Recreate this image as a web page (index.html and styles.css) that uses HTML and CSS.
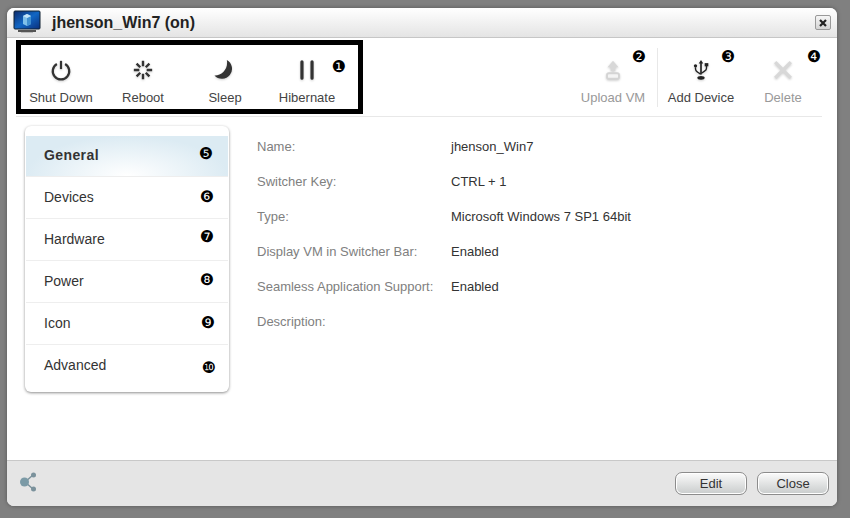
FILE: index.html
```html
<!DOCTYPE html>
<html lang="en">
<head>
    <meta charset="UTF-8">
    <meta name="viewport" content="width=device-width, initial-scale=1.0">
    <title>jhenson_Win7 (on)</title>
    <link rel="stylesheet" href="styles.css">
</head>
<body>
    <div class="window">
        <!-- Title bar -->
        <div class="titlebar">
            <svg class="vm-icon" width="28" height="28" viewBox="0 0 28 28">
                <defs>
                    <linearGradient id="screen" x1="0" y1="0" x2="1" y2="1">
                        <stop offset="0" stop-color="#0b2a6b"/>
                        <stop offset="0.5" stop-color="#1166c4"/>
                        <stop offset="1" stop-color="#0a2f7c"/>
                    </linearGradient>
                </defs>
                <rect x="1" y="2" width="26" height="18" rx="1" fill="url(#screen)" stroke="#123"/>
                <path d="M10 7l4-2 4 2v8l-4 2-4-2z" fill="#7fc0ea"/>
                <path d="M14 9v8l4-2V7z" fill="#3f8fd0"/>
                <path d="M10 7l4 2 4-2-4-2z" fill="#c3e3f7"/>
                <rect x="5" y="21" width="18" height="2" fill="#555"/>
                <rect x="8" y="23" width="12" height="1" fill="#bbb"/>
            </svg>
            <span class="title">jhenson_Win7 (on)</span>
            <button class="close-x">
                <svg width="10" height="10" viewBox="0 0 10 10"><path d="M2 2l6 6M8 2l-6 6" stroke="#222" stroke-width="2.2"/></svg>
            </button>
        </div>

        <!-- Toolbar -->
        <div class="toolbar">
            <div class="highlight"></div>
            <div class="action">
                <svg class="icon" width="22" height="22" viewBox="0 0 24 24"><path d="M7.500 5.500a9 9 0 1 0 9 0" fill="none" stroke="#333" stroke-width="2.4"/><path d="M12 2v9" stroke="#333" stroke-width="2.4"/></svg>
                <span>Shut Down</span>
            </div>
            <div class="action">
                <svg class="icon" width="22" height="22" viewBox="0 0 24 24"><path d="M12 2v6M12 16v6M2 12h6M16 12h6M5 5l4 4M15 15l4 4M19 5l-4 4M9 15l-4 4" stroke="#333" stroke-width="2.6"/></svg>
                <span>Reboot</span>
            </div>
            <div class="action">
                <svg class="icon" width="22" height="22" viewBox="0 0 24 24"><path d="M14 1A11 11 0 1 1 0.500 18C8 18.500 16 11 14 1z" fill="#333"/></svg>
                <span>Sleep</span>
            </div>
            <div class="action">
                <svg class="icon" width="22" height="22" viewBox="0 0 24 24"><path d="M6.500 3v18M17.500 3v18" stroke="#333" stroke-width="3.500" stroke-linecap="round"/></svg>
                <span>Hibernate</span>
                <b class="badge badge-1">❶</b>
            </div>
            <div class="action disabled push">
                <svg class="icon" width="22" height="22" viewBox="0 0 24 24"><path d="M12 2l6 7h-3.500v4h-5V9H6z" fill="#d8d8d8"/><rect x="5.500" y="15.500" width="13" height="6" rx="2" fill="#f4f4f4" stroke="#d4d4d4" stroke-width="2"/></svg>
                <span>Upload VM</span>
                <b class="badge badge-2">❷</b>
            </div>
            <div class="divider"></div>
            <div class="action">
                <svg class="icon" width="22" height="22" viewBox="0 0 24 24"><path d="M12 1l2.500 4h-1.600v12h-1.800V5H9.500z" fill="#222"/><path d="M6 9v2c0 2 1 2.500 2.500 3.500l3 2M18 7v3c0 2-1 2.500-2.500 3.500l-3 2" fill="none" stroke="#222" stroke-width="1.500"/><circle cx="6" cy="7.500" r="1.800" fill="#222"/><rect x="16" y="4.500" width="4" height="3.500" fill="#222"/><ellipse cx="12" cy="20.500" rx="4" ry="2" fill="#222"/></svg>
                <span>Add Device</span>
                <b class="badge badge-3">❸</b>
            </div>
            <div class="action disabled">
                <svg class="icon" width="22" height="22" viewBox="0 0 24 24"><path d="M3.500 3.500l17 17M20.500 3.500l-17 17" stroke="#d8d8d8" stroke-width="3.500"/></svg>
                <span>Delete</span>
                <b class="badge badge-4">❹</b>
            </div>
        </div>

        <div class="content">
            <!-- Side navigation -->
            <ul class="nav">
                <li class="nav-item active">General<b class="badge badge-5">❺</b></li>
                <li class="nav-item">Devices<b class="badge badge-6">❻</b></li>
                <li class="nav-item">Hardware<b class="badge badge-7">❼</b></li>
                <li class="nav-item">Power<b class="badge badge-8">❽</b></li>
                <li class="nav-item">Icon<b class="badge badge-9">❾</b></li>
                <li class="nav-item">Advanced<b class="badge badge-10">❿</b></li>
            </ul>

            <!-- VM details -->
            <dl class="details">
                <dt>Name:</dt><dd>jhenson_Win7</dd>
                <dt>Switcher Key:</dt><dd>CTRL + 1</dd>
                <dt>Type:</dt><dd>Microsoft Windows 7 SP1 64bit</dd>
                <dt>Display VM in Switcher Bar:</dt><dd>Enabled</dd>
                <dt>Seamless Application Support:</dt><dd>Enabled</dd>
                <dt>Description:</dt><dd></dd>
            </dl>
        </div>

        <!-- Footer -->
        <div class="footer">
            <svg class="share" width="20" height="20" viewBox="0 0 20 20"><path d="M7 10L15 3M7 10l8 7" stroke="#7b929c" stroke-width="1.500"/><circle cx="6.500" cy="10" r="4.500" fill="#7b9aa6"/><circle cx="15.500" cy="3" r="2.500" fill="#7b929c"/><circle cx="15.500" cy="17" r="2.500" fill="#7b929c"/></svg>
            <button class="btn">Edit</button>
            <button class="btn">Close</button>
        </div>
    </div>
</body>
</html>
```

FILE: styles.css
```css
/* Global Styles */
* {
    box-sizing: border-box;
}

body {
    margin: 0;
    height: 518px;
    padding: 8px 13px 12px 7px;
    background-color: #808080;
    font-family: 'Liberation Sans', Arial, sans-serif;
    overflow: hidden;
}

.window {
    display: flex;
    flex-direction: column;
    height: 498px;
    background-color: #fff;
    border-radius: 7px;
    box-shadow: 0 0 4px rgba(0, 0, 0, 0.35);
    overflow: hidden;
}

/* Title Bar */
.titlebar {
    display: flex;
    align-items: center;
    flex: none;
    height: 30px;
    padding: 0 6px 0 6px;
    background: linear-gradient(#fff, #e4e4e4);
    border-bottom: 1px solid #c6c6c6;
}

.vm-icon {
    margin-right: 11px;
}

.title {
    font-size: 16px;
    font-weight: bold;
    color: #222;
}

.close-x {
    display: flex;
    align-items: center;
    justify-content: center;
    width: 16px;
    height: 15px;
    margin-left: auto;
    margin-right: 0;
    padding: 0;
    background: linear-gradient(#f6f6f6, #d4d4d4);
    border: 1px solid #999;
    border-radius: 2px;
}

/* Toolbar */
.toolbar {
    position: relative;
    display: flex;
    flex: none;
    height: 79px;
    margin: 0 15px 0 9px;
    padding: 10px 0 0 4px;
    border-bottom: 1px solid #e8e8e8;
}

.highlight {
    position: absolute;
    left: 0;
    top: 2px;
    width: 347px;
    height: 74px;
    border: 5px solid #000;
}

.action {
    position: relative;
    display: flex;
    flex-direction: column;
    align-items: center;
    width: 82px;
    font-size: 13px;
    color: #444;
}

.action:last-child {
    margin-right: -2px;
}

.action span {
    margin-top: 9px;
}

.action .icon {
    margin-top: 11px;
    filter: drop-shadow(0 1px 1px rgba(0, 0, 0, 0.2));
}

.action.disabled {
    color: #999;
}

.push {
    margin-left: auto;
}

.divider {
    width: 1px;
    height: 59px;
    margin: 0 2px 0 3px;
    background-color: #e8e8e8;
}

/* Numbered Callouts */
.badge {
    position: absolute;
    width: 18px;
    font-family: 'DejaVu Sans', sans-serif;
    font-size: 16px;
    font-weight: normal;
    letter-spacing: 0;
    line-height: 18px;
    text-align: center;
    color: #000;
}

.badge-1 { left: 64px; top: 10px; }
.badge-2 { left: 58px; top: 0; }
.badge-3 { left: 59px; top: 0; }
.badge-4 { left: 63px; top: 0; }
.badge-5 { left: 171px; top: 9px; }
.badge-6 { left: 172px; top: 11px; }
.badge-7 { left: 172px; top: 9px; }
.badge-8 { left: 172px; top: 10px; }
.badge-9 { left: 173px; top: 11px; }
.badge-10 { left: 174px; top: 14px; }

/* Side Navigation */
.content {
    display: flex;
    flex: 1;
    padding: 9px 0 0 18px;
}

.nav {
    flex: none;
    width: 204px;
    height: 266px;
    margin: 0;
    padding: 10px 1px 0;
    list-style: none;
    border-radius: 6px;
    box-shadow: 0 1px 3px rgba(0, 0, 0, 0.45);
}

.nav-item {
    position: relative;
    height: 42px;
    padding: 11px 0 0 18px;
    font-size: 14px;
    line-height: 18px;
    color: #333;
    border-bottom: 1px solid #eee;
}

.nav-item:last-child {
    border-bottom: none;
}

.nav-item.active {
    height: 41px;
    padding-top: 10px;
    font-weight: bold;
    letter-spacing: 0.4px;
    background: radial-gradient(ellipse 50% 100% at 50% 100%, #fff, #dcebf3) padding-box;
}

/* VM Details */
.details {
    display: grid;
    grid-template-columns: 194px 1fr;
    grid-auto-rows: 35px;
    align-content: start;
    margin: 11px 0 0 28px;
    font-size: 13px;
    line-height: 20px;
}

.details dt {
    color: #808080;
}

.details dd {
    margin: 0;
    color: #333;
}

/* Footer */
.footer {
    display: flex;
    align-items: center;
    gap: 10px;
    flex: none;
    height: 46px;
    padding: 0 8px 0 11px;
    background-color: #e5e5e5;
    border-top: 1px solid #c8c8c8;
}

.share {
    margin-right: auto;
    margin-bottom: 3px;
}

.btn {
    width: 72px;
    height: 23px;
    padding: 0;
    font-family: inherit;
    font-size: 13px;
    color: #333;
    background: linear-gradient(#fbfbfb, #c9cccc);
    border: 1px solid #8c8c8c;
    border-radius: 7px;
    box-shadow: inset 0 0 0 1px #fff;
}
```
